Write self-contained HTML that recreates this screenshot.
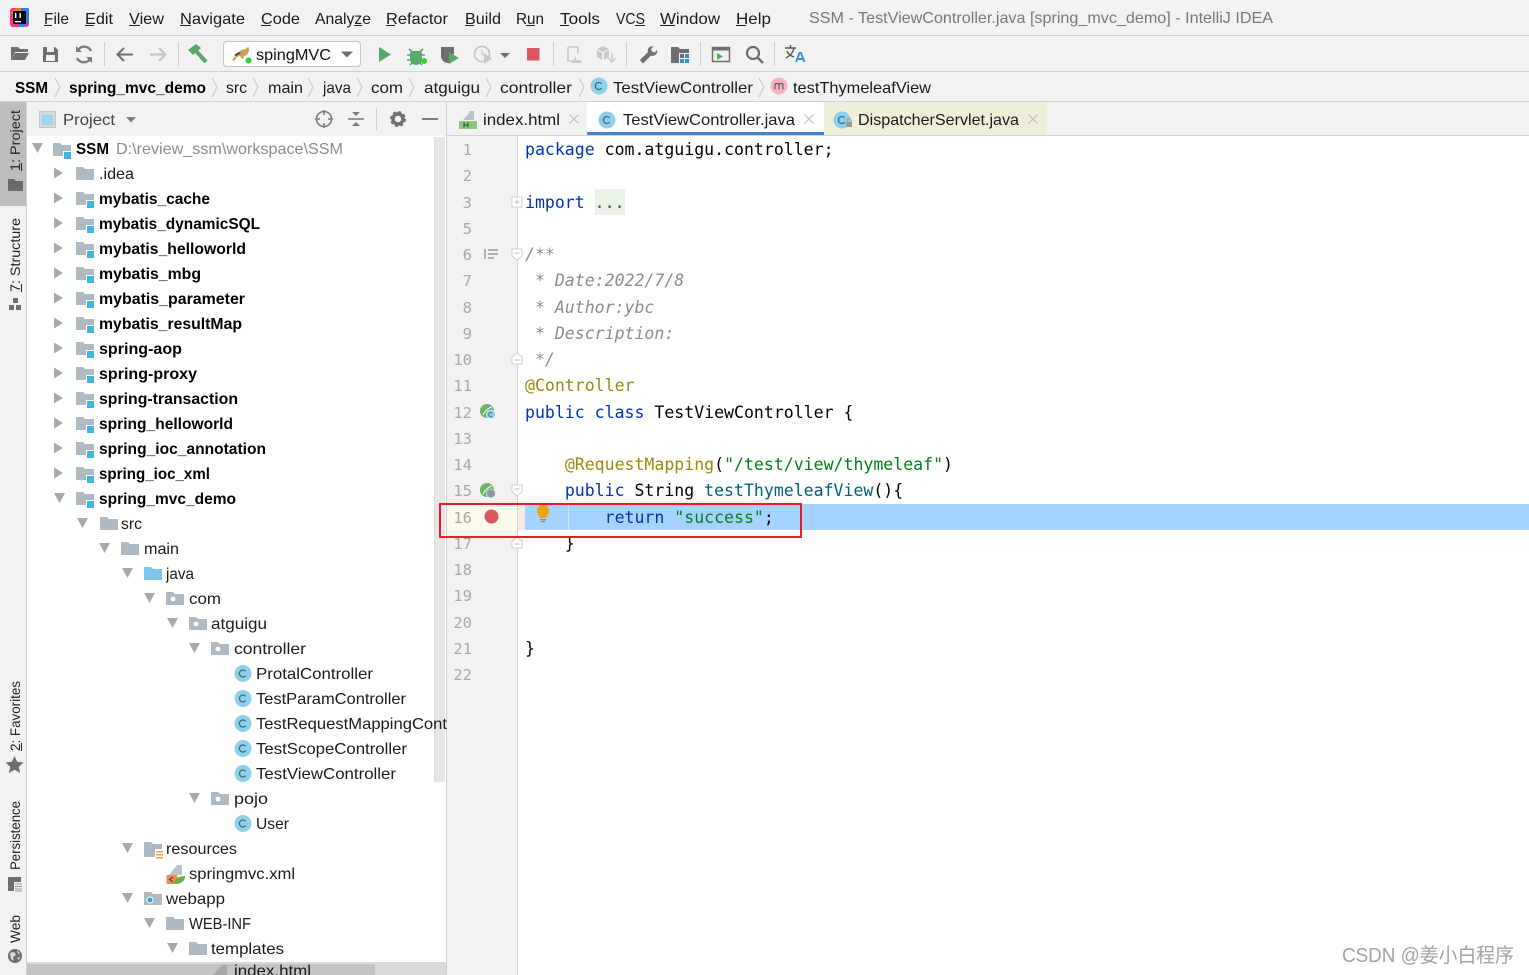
<!DOCTYPE html>
<html><head><meta charset="utf-8"><title>SSM - TestViewController.java</title>
<style>
html,body{margin:0;padding:0;background:#fff;overflow:hidden}
svg{display:block}
text{font-family:"Liberation Sans","Noto Sans CJK SC",sans-serif;font-size:16px;fill:#1a1a1a;white-space:pre}
.b{font-weight:bold;fill:#000}
.g{fill:#8c8c8c}
.m{font-family:"DejaVu Sans Mono","Liberation Mono",monospace;font-size:16.55px;fill:#000}
.n{font-family:"DejaVu Sans Mono","Liberation Mono",monospace;font-size:15.5px;fill:#a8a8a8;text-anchor:end}
.k{fill:#0033b3}.a{fill:#9e880d}.s{fill:#067d17}.c{fill:#8c8c8c;font-style:italic}.f{fill:#00627a}
.v{font-size:14px;fill:#222}
</style></head><body>
<svg width="1529" height="975" viewBox="0 0 1529 975" xmlns="http://www.w3.org/2000/svg">
<defs>
<symbol id="fo" overflow="visible"><path d="M0 1h7l2 2h9v11H0z" fill="#afb9c1"/></symbol>
<symbol id="mo" overflow="visible"><path d="M0 1h7l2 2h9v11H0z" fill="#afb9c1"/><rect x="10.500" y="9.500" width="8" height="8" fill="#40b6e0" stroke="#fff" stroke-width="1"/></symbol>
<symbol id="pk" overflow="visible"><path d="M0 1h7l2 2h9v11H0z" fill="#afb9c1"/><circle cx="7" cy="8" r="2.4" fill="#fff"/></symbol>
<symbol id="cl" overflow="visible"><circle r="8.5" fill="#8dd1ec"/><path d="M2.6-2.2A3.5 3.5 0 1 0 2.6 2.2" fill="none" stroke="#4d6470" stroke-width="1.3"/></symbol>
<symbol id="tr" overflow="visible"><path d="M-5-5.5L4 0L-5 5.5z" fill="#a9a9a9"/></symbol>
<symbol id="td" overflow="visible"><path d="M-5-5H6L0.500 5z" fill="#a9a9a9"/></symbol>
<symbol id="fd" overflow="visible"><path d="M-5-5h10v7l-5 4l-5-4z" fill="#fff" stroke="#d0d0d0"/><path d="M-2.5-1h5" stroke="#bbb"/></symbol>
<symbol id="fu" overflow="visible"><path d="M-5 5h10v-7l-5-4l-5 4z" fill="#fff" stroke="#d0d0d0"/><path d="M-2.5 1h5" stroke="#bbb"/></symbol>
</defs>

<!-- base -->
<rect width="1529" height="975" fill="#fff"/>
<rect width="1529" height="136" fill="#f2f2f2"/>
<rect y="35" width="1529" height="1" fill="#d1d1d1"/>
<rect y="71" width="1529" height="1" fill="#d1d1d1"/>
<rect y="101" width="1529" height="1" fill="#d1d1d1"/>
<rect y="135" x="447" width="1082" height="1" fill="#d1d1d1"/>
<rect y="102" width="27" height="873" fill="#f2f2f2"/>
<rect x="26" y="102" width="1" height="873" fill="#d1d1d1"/>
<rect y="102" width="26" height="104" fill="#bdbdbd"/>
<rect x="446" y="102" width="1" height="873" fill="#d1d1d1"/>
<rect x="27" y="102" width="419" height="34" fill="#f2f2f2"/>

<!-- title / menu -->
<g>
<rect x="10" y="8" width="19" height="19" rx="3" fill="#ff318c"/>
<path d="M19 8h9a1 1 0 0 1 1 1v12l-4 6h-6z" fill="#3b7bf0"/>
<path d="M10 14l6-6h5v6z" fill="#f97a12"/>
<rect x="13" y="11" width="13" height="13" fill="#000"/>
<rect x="15" y="21" width="6" height="1.3" fill="#fff"/>
<rect x="15" y="13" width="1.4" height="5" fill="#fff"/><rect x="19.5" y="13" width="1.4" height="5" fill="#fff"/>
</g>
<text x="44" y="24" textLength="25" lengthAdjust="spacingAndGlyphs">File</text><rect x="44" y="25" width="8" height="1" fill="#222"/>
<text x="85" y="24" textLength="28" lengthAdjust="spacingAndGlyphs">Edit</text><rect x="85" y="25" width="9" height="1" fill="#222"/>
<text x="129" y="24" textLength="35" lengthAdjust="spacingAndGlyphs">View</text><rect x="129" y="25" width="11" height="1" fill="#222"/>
<text x="180" y="24" textLength="65" lengthAdjust="spacingAndGlyphs">Navigate</text><rect x="180" y="25" width="11" height="1" fill="#222"/>
<text x="261" y="24" textLength="39" lengthAdjust="spacingAndGlyphs">Code</text><rect x="261" y="25" width="10" height="1" fill="#222"/>
<text x="315" y="24" textLength="56" lengthAdjust="spacingAndGlyphs">Analyze</text><rect x="354" y="25" width="8" height="1" fill="#222"/>
<text x="386" y="24" textLength="62" lengthAdjust="spacingAndGlyphs">Refactor</text><rect x="386" y="25" width="9" height="1" fill="#222"/>
<text x="465" y="24" textLength="36" lengthAdjust="spacingAndGlyphs">Build</text><rect x="465" y="25" width="9" height="1" fill="#222"/>
<text x="516" y="24" textLength="28" lengthAdjust="spacingAndGlyphs">Run</text><rect x="526" y="25" width="9" height="1" fill="#222"/>
<text x="560" y="24" textLength="40" lengthAdjust="spacingAndGlyphs">Tools</text><rect x="560" y="25" width="9" height="1" fill="#222"/>
<text x="616" y="24" textLength="29" lengthAdjust="spacingAndGlyphs">VCS</text><rect x="635" y="25" width="10" height="1" fill="#222"/>
<text x="660" y="24" textLength="60" lengthAdjust="spacingAndGlyphs">Window</text><rect x="660" y="25" width="15" height="1" fill="#222"/>
<text x="736" y="24" textLength="35" lengthAdjust="spacingAndGlyphs">Help</text><rect x="736" y="25" width="10" height="1" fill="#222"/>
<text x="809" y="23" textLength="464" lengthAdjust="spacingAndGlyphs" fill="#777" style="fill:#777">SSM - TestViewController.java [spring_mvc_demo] - IntelliJ IDEA</text>

<!-- toolbar -->
<path d="M11 47h7l2 2h8v3H15l-4 8zM15 53h14l-4 7H11z" fill="#6e6e6e"/>
<path d="M43 47h12l3 3v12H43z" fill="#6e6e6e"/><rect x="47" y="47" width="7" height="5" fill="#f2f2f2"/><rect x="46" y="55" width="9" height="6" fill="#f2f2f2"/>
<path d="M91 51a7.500 7.500 0 0 0-13-1M77 58a7.500 7.500 0 0 0 13 1" fill="none" stroke="#7d7d7d" stroke-width="2.400"/><path d="M76 46v6h6zM92 63v-6h-6z" fill="#7d7d7d"/>
<rect x="104" y="42" width="1" height="24" fill="#cfcfcf"/>
<path d="M133 54.500H118M124 48l-6.500 6.500l6.500 6.500" fill="none" stroke="#6e6e6e" stroke-width="2"/>
<path d="M150 54.500h15M159 48l6.500 6.500l-6.500 6.500" fill="none" stroke="#c2c2c2" stroke-width="2"/>
<rect x="178" y="42" width="1" height="24" fill="#cfcfcf"/>
<path d="M188 50l8-6 5 4-8 7z" fill="#59a869"/><path d="M196 51l10 11" stroke="#59a869" stroke-width="4" fill="none"/>
<rect x="223.500" y="41.500" width="137" height="25" rx="3" fill="#fff" stroke="#c4c4c4"/>
<path d="M232 60l6-7 3-3 5-1 1-2 1 1 1-1 0 4-2 4-3 1-1 3-2-1-1-2-3 1-3 4z" fill="#c9a35c"/><path d="M234 55l5-3 2 1-5 3z" fill="#3a3a3a"/><circle cx="248.500" cy="60.500" r="3" fill="#2fd02f"/>
<text x="256" y="60" textLength="75" lengthAdjust="spacingAndGlyphs" style="fill:#111">spingMVC</text>
<path d="M341 51.500h12l-6 6z" fill="#6e6e6e"/>
<path d="M379 47l12 7.500-12 7.500z" fill="#59a869"/>
<path d="M411 51h10l1 2v6a5.500 5.500 0 0 1-12 0v-6z" fill="#59a869"/><path d="M409 49l3 3M423 49l-3 3M407 55h4M421 55h4M407 60h4M421 60h4M410 65l2-2M422 65l-2-2M416 52v11" stroke="#59a869" stroke-width="1.600" fill="none"/><circle cx="424" cy="61" r="3" fill="#2fd02f"/>
<path d="M441 47h13v7l-4 1v8h-2a7 7 0 0 1-7-7z" fill="#6e6e6e"/><path d="M449 52l10 6-10 6z" fill="#59a869"/>
<circle cx="482" cy="54" r="7.500" fill="none" stroke="#c2c2c2" stroke-width="1.600"/><path d="M482 50v4.500l3 1.500" fill="none" stroke="#c2c2c2"/><path d="M484 53l8 5.500-8 5.500z" fill="#c9c9c9"/>
<path d="M500 53h10l-5 5z" fill="#6e6e6e"/>
<rect x="527" y="48" width="12.500" height="12.500" fill="#db5860"/>
<rect x="553" y="42" width="1" height="24" fill="#cfcfcf"/>
<path d="M568 47h10v7M568 47v14h5" fill="none" stroke="#c9c9c9" stroke-width="1.600"/><path d="M571 63l5-7v4h5l1 3z" fill="#c9c9c9"/>
<path d="M597 49l6-3 6 3-6 3zM597 50v7l5 3v-7zM609 50l-5 3v7l5-3z" fill="#c9c9c9"/><path d="M612 53v8M608.500 58l3.500 4 3.500-4" fill="none" stroke="#c9c9c9" stroke-width="1.600"/>
<rect x="626" y="42" width="1" height="24" fill="#cfcfcf"/>
<path d="M640 60l8-8a4.500 4.500 0 0 1 1-4.500a4.500 4.500 0 0 1 4.500-1l-2.500 2.500 1 2.500 2.500 1 2.500-2.500a4.500 4.500 0 0 1-6 5.500l-8 8z" fill="#6e6e6e"/>
<path d="M671 47h7l2 2h9v4h-10v10h-8z" fill="#6e6e6e"/><g fill="#3592c4"><rect x="685" y="54" width="4" height="4"/><rect x="680" y="59" width="4" height="4"/><rect x="685" y="59" width="4" height="4"/></g><rect x="680" y="54" width="4" height="4" fill="#6e6e6e"/>
<rect x="700" y="42" width="1" height="24" fill="#cfcfcf"/>
<rect x="712.500" y="47.500" width="17" height="14" fill="none" stroke="#6e6e6e" stroke-width="1.500"/><rect x="712" y="47" width="18" height="3.500" fill="#6e6e6e"/><path d="M717 53l6 3.500-6 3.500z" fill="#59a869"/>
<circle cx="753" cy="53" r="6" fill="none" stroke="#6e6e6e" stroke-width="2.200"/><path d="M757.500 57.500l5.500 5.500" stroke="#6e6e6e" stroke-width="2.400"/>
<rect x="774" y="42" width="1" height="24" fill="#cfcfcf"/>
<path d="M785 48h11M790.500 45v3M794 48c-1 5-4 8-8 10M787 51c1 3 4 5 7 6" fill="none" stroke="#555" stroke-width="1.400"/><path d="M796 62l3.500-9h1.500l3.500 9M797.500 59h6" fill="none" stroke="#3b8de0" stroke-width="1.900"/>

<!-- breadcrumb -->
<g fill="none" stroke="#c7c7c7" stroke-width="1"><path d="M55 78l5 9-5 10M212 78l5 9-5 10M253 78l5 9-5 10M308 78l5 9-5 10M357 78l5 9-5 10M409 78l5 9-5 10M486 78l5 9-5 10M579 78l5 9-5 10M759 78l5 9-5 10"/></g>
<text class="b" x="15" y="93" textLength="33" lengthAdjust="spacingAndGlyphs">SSM</text>
<text class="b" x="69" y="93" textLength="137" lengthAdjust="spacingAndGlyphs">spring_mvc_demo</text>
<text x="226" y="93" textLength="21" lengthAdjust="spacingAndGlyphs">src</text>
<text x="268" y="93" textLength="35" lengthAdjust="spacingAndGlyphs">main</text>
<text x="323" y="93" textLength="28" lengthAdjust="spacingAndGlyphs">java</text>
<text x="371" y="93" textLength="32" lengthAdjust="spacingAndGlyphs">com</text>
<text x="424" y="93" textLength="56" lengthAdjust="spacingAndGlyphs">atguigu</text>
<text x="500" y="93" textLength="72" lengthAdjust="spacingAndGlyphs">controller</text>
<use href="#cl" x="599" y="86"/>
<text x="613" y="93" textLength="140" lengthAdjust="spacingAndGlyphs">TestViewController</text>
<circle cx="779" cy="86" r="8.500" fill="#f5b4c0"/>
<path d="M775 89.500v-6M775 85q0-1.500 2-1.500t2 1.500v4.500M779 85q0-1.500 2-1.500t2 1.500v4.500" fill="none" stroke="#6a5a5e" stroke-width="1.200"/>
<text x="793" y="93" textLength="138" lengthAdjust="spacingAndGlyphs">testThymeleafView</text>

<!-- project header -->
<rect x="39.500" y="111.500" width="16" height="16" fill="#d4dbe0" stroke="#c0c8ce"/><rect x="42" y="115" width="11" height="10" fill="#9ed5f0"/>
<text x="63" y="125" textLength="52" lengthAdjust="spacingAndGlyphs" style="fill:#444">Project</text>
<path d="M126 117h10l-5 5.500z" fill="#7c7c7c"/>
<circle cx="324" cy="119" r="7.500" fill="none" stroke="#7c7c7c" stroke-width="1.600"/><path d="M324 110v5M324 123v5M315 119h5M328 119h5" stroke="#7c7c7c" stroke-width="1.600"/>
<path d="M348 119h16" stroke="#7c7c7c" stroke-width="1.600"/><path d="M352 112h8l-4 4zM352 126h8l-4-4z" fill="#7c7c7c"/>
<rect x="376" y="108" width="1" height="22" fill="#d1d1d1"/>
<circle cx="398" cy="119" r="5" fill="none" stroke="#6e6e6e" stroke-width="3.400"/><circle cx="398" cy="119" r="7" fill="none" stroke="#6e6e6e" stroke-width="2" stroke-dasharray="3 2.500"/>
<rect x="422" y="118" width="16" height="2" fill="#7c7c7c"/>

<!-- left stripe -->
<text class="v" transform="translate(20 171) rotate(-90)" textLength="61" lengthAdjust="spacingAndGlyphs">1: Project</text>
<rect x="21" y="163" width="1" height="8" fill="#222"/>
<path d="M8 179h6l2 2h7v10H8z" fill="#6a6a6a"/>
<text class="v" transform="translate(20 292) rotate(-90)" textLength="74" lengthAdjust="spacingAndGlyphs">7: Structure</text>
<rect x="21" y="284" width="1" height="8" fill="#222"/>
<g fill="#6e6e6e"><rect x="13" y="298" width="5" height="5"/><rect x="9" y="305" width="5" height="5"/><rect x="16" y="305" width="5" height="5"/></g>
<text class="v" transform="translate(20 751) rotate(-90)" textLength="70" lengthAdjust="spacingAndGlyphs">2: Favorites</text>
<rect x="21" y="743" width="1" height="8" fill="#222"/>
<path d="M14.500 756l2.700 5.800 6.300.7-4.700 4.300 1.300 6.200-5.600-3.200-5.600 3.200 1.300-6.200-4.700-4.300 6.300-.7z" fill="#6e6e6e"/>
<text class="v" transform="translate(20 870) rotate(-90)" textLength="69" lengthAdjust="spacingAndGlyphs">Persistence</text>
<path d="M8 877h13v5h-7v9H8z" fill="#6e6e6e"/><path d="M15 884h7M15 886.500h7M15 889h7M15 891h7" stroke="#9a9a9a"/>
<text class="v" transform="translate(20 943) rotate(-90)" textLength="28" lengthAdjust="spacingAndGlyphs">Web</text>
<circle cx="15" cy="956" r="7" fill="#6e6e6e"/><path d="M10 953l4-1 2 3-3 2 1 4-3-2zM17 950l3 3-2 1zM17 958l3-1-1 3z" fill="#ddd"/>

<!-- project scrollbar -->
<rect x="434" y="137" width="11" height="645" fill="#e6e6e6"/>
<rect x="434" y="137" width="1" height="645" fill="#dcdcdc"/>

<!-- tree -->
<use href="#td" x="37" y="148"/>
<use href="#mo" x="53" y="142"/>
<text class="b" x="76" y="154" textLength="33" lengthAdjust="spacingAndGlyphs">SSM</text>
<text class="g" x="116" y="154" textLength="227" lengthAdjust="spacingAndGlyphs">D:\review_ssm\workspace\SSM</text>

<use href="#tr" x="59" y="173"/><use href="#fo" x="76" y="166"/><text x="99" y="179" textLength="35" lengthAdjust="spacingAndGlyphs">.idea</text>
<use href="#tr" x="59" y="198"/><use href="#mo" x="76" y="191"/><text class="b" x="99" y="204" textLength="111" lengthAdjust="spacingAndGlyphs">mybatis_cache</text>
<use href="#tr" x="59" y="223"/><use href="#mo" x="76" y="216"/><text class="b" x="99" y="229" textLength="161" lengthAdjust="spacingAndGlyphs">mybatis_dynamicSQL</text>
<use href="#tr" x="59" y="248"/><use href="#mo" x="76" y="241"/><text class="b" x="99" y="254" textLength="147" lengthAdjust="spacingAndGlyphs">mybatis_helloworld</text>
<use href="#tr" x="59" y="273"/><use href="#mo" x="76" y="266"/><text class="b" x="99" y="279" textLength="102" lengthAdjust="spacingAndGlyphs">mybatis_mbg</text>
<use href="#tr" x="59" y="298"/><use href="#mo" x="76" y="291"/><text class="b" x="99" y="304" textLength="146" lengthAdjust="spacingAndGlyphs">mybatis_parameter</text>
<use href="#tr" x="59" y="323"/><use href="#mo" x="76" y="316"/><text class="b" x="99" y="329" textLength="143" lengthAdjust="spacingAndGlyphs">mybatis_resultMap</text>
<use href="#tr" x="59" y="348"/><use href="#mo" x="76" y="341"/><text class="b" x="99" y="354" textLength="83" lengthAdjust="spacingAndGlyphs">spring-aop</text>
<use href="#tr" x="59" y="373"/><use href="#mo" x="76" y="366"/><text class="b" x="99" y="379" textLength="98" lengthAdjust="spacingAndGlyphs">spring-proxy</text>
<use href="#tr" x="59" y="398"/><use href="#mo" x="76" y="391"/><text class="b" x="99" y="404" textLength="139" lengthAdjust="spacingAndGlyphs">spring-transaction</text>
<use href="#tr" x="59" y="423"/><use href="#mo" x="76" y="416"/><text class="b" x="99" y="429" textLength="134" lengthAdjust="spacingAndGlyphs">spring_helloworld</text>
<use href="#tr" x="59" y="448"/><use href="#mo" x="76" y="441"/><text class="b" x="99" y="454" textLength="167" lengthAdjust="spacingAndGlyphs">spring_ioc_annotation</text>
<use href="#tr" x="59" y="473"/><use href="#mo" x="76" y="466"/><text class="b" x="99" y="479" textLength="111" lengthAdjust="spacingAndGlyphs">spring_ioc_xml</text>
<use href="#td" x="59" y="498"/><use href="#mo" x="76" y="491"/><text class="b" x="99" y="504" textLength="137" lengthAdjust="spacingAndGlyphs">spring_mvc_demo</text>
<use href="#td" x="82" y="523"/><use href="#fo" x="100" y="516"/><text x="121" y="529" textLength="21" lengthAdjust="spacingAndGlyphs">src</text>
<use href="#td" x="104" y="548"/><use href="#fo" x="121" y="541"/><text x="144" y="554" textLength="35" lengthAdjust="spacingAndGlyphs">main</text>
<use href="#td" x="127" y="573"/><path d="M144 567h7l2 2h9v11h-18z" fill="#80c5ea"/><text x="166" y="579" textLength="28" lengthAdjust="spacingAndGlyphs">java</text>
<use href="#td" x="149" y="598"/><use href="#pk" x="166" y="591"/><text x="189" y="604" textLength="32" lengthAdjust="spacingAndGlyphs">com</text>
<use href="#td" x="172" y="623"/><use href="#pk" x="189" y="616"/><text x="211" y="629" textLength="56" lengthAdjust="spacingAndGlyphs">atguigu</text>
<use href="#td" x="194" y="648"/><use href="#pk" x="211" y="641"/><text x="234" y="654" textLength="72" lengthAdjust="spacingAndGlyphs">controller</text>
<use href="#cl" x="243" y="673.500"/><text x="256" y="679" textLength="117" lengthAdjust="spacingAndGlyphs">ProtalController</text>
<use href="#cl" x="243" y="698.500"/><text x="256" y="704" textLength="150" lengthAdjust="spacingAndGlyphs">TestParamController</text>
<use href="#cl" x="243" y="723.500"/><text x="256" y="729" textLength="191" lengthAdjust="spacingAndGlyphs">TestRequestMappingCont</text>
<use href="#cl" x="243" y="748.500"/><text x="256" y="754" textLength="151" lengthAdjust="spacingAndGlyphs">TestScopeController</text>
<use href="#cl" x="243" y="773.500"/><text x="256" y="779" textLength="140" lengthAdjust="spacingAndGlyphs">TestViewController</text>
<use href="#td" x="194" y="798"/><use href="#pk" x="211" y="791"/><text x="234" y="804" textLength="34" lengthAdjust="spacingAndGlyphs">pojo</text>
<use href="#cl" x="243" y="823.500"/><text x="256" y="829" textLength="33" lengthAdjust="spacingAndGlyphs">User</text>
<use href="#td" x="127" y="848"/><path d="M144 842h7l2 2h9v5h-7v8h-11z" fill="#afb9c1"/><path d="M156 851h7v1.500h-7zM156 854h7v1.500h-7zM156 857h7v1.500h-7z" fill="#e4a94e"/><text x="166" y="854" textLength="71" lengthAdjust="spacingAndGlyphs">resources</text>
<path d="M169 875l8-10h5v10z" fill="#bcc3c9"/><rect x="166.500" y="875" width="11" height="9" fill="#f08a5d"/><path d="M174 883q1-7 11-7q0 8-11 8z" fill="#6db33f"/><path d="M173 877l-3.500 2.500 3.500 2.500" fill="none" stroke="#333"/><text x="189" y="879" textLength="106" lengthAdjust="spacingAndGlyphs">springmvc.xml</text>
<use href="#td" x="127" y="898"/><path d="M144 892h7l2 2h9v11h-18z" fill="#afb9c1"/><circle cx="150" cy="900" r="3" fill="#2f9fe0" stroke="#fff"/><text x="166" y="904" textLength="59" lengthAdjust="spacingAndGlyphs">webapp</text>
<use href="#td" x="149" y="923"/><use href="#fo" x="166" y="916"/><text x="189" y="929" textLength="62" lengthAdjust="spacingAndGlyphs">WEB-INF</text>
<use href="#td" x="172" y="948"/><use href="#fo" x="189" y="941"/><text x="211" y="954" textLength="73" lengthAdjust="spacingAndGlyphs">templates</text>
<rect x="27" y="962" width="419" height="13" fill="#d9d9d9"/>
<rect x="27" y="964" width="348" height="11" fill="#c4c4c4"/>
<path d="M213 975l9-10h5v10z" fill="#a9a9a9"/>
<text x="234" y="976" textLength="77" lengthAdjust="spacingAndGlyphs">index.html</text>

<!-- tabs -->
<rect x="447" y="102" width="140" height="33" fill="#f2f2f2"/>
<rect x="587" y="102" width="237" height="30" fill="#fff"/>
<rect x="587" y="132" width="237" height="3" fill="#4083c9"/>
<rect x="824" y="102" width="223" height="33" fill="#efefd9"/>
<path d="M463 120l6-7v-2h5v9z" fill="#bcc3c9"/><rect x="459" y="121" width="18" height="8" fill="#8fc57a"/><path d="M464 122.500v5M468 122.500v5M464 125h4" stroke="#2f4f2f" stroke-width="1.100"/>
<text x="483" y="125" textLength="77" lengthAdjust="spacingAndGlyphs">index.html</text>
<path d="M569.500 114.500l9 9M578.500 114.500l-9 9" stroke="#c0c0c0" stroke-width="1.200"/>
<use href="#cl" x="607" y="120"/>
<text x="623" y="125" textLength="172" lengthAdjust="spacingAndGlyphs">TestViewController.java</text>
<path d="M804.500 114.500l9 9M813.500 114.500l-9 9" stroke="#c0c0c0" stroke-width="1.200"/>
<use href="#cl" x="842" y="120"/>
<rect x="846" y="122" width="6" height="5" fill="#9a9a9a"/><path d="M847 122v-1.500a2 2 0 0 1 4 0V122" fill="none" stroke="#9a9a9a"/>
<text x="858" y="125" textLength="161" lengthAdjust="spacingAndGlyphs">DispatcherServlet.java</text>
<path d="M1028.500 114.500l9 9M1037.500 114.500l-9 9" stroke="#c0c0c0" stroke-width="1.200"/>

<!-- gutter -->
<rect x="447" y="136" width="70" height="839" fill="#f2f2f2"/>
<rect x="517" y="136" width="1" height="839" fill="#d5d5d5"/>
<rect x="447" y="504" width="70" height="26" fill="#fcfaed"/>
<rect x="518" y="504" width="7" height="26" fill="#faeae6"/>
<rect x="525" y="504" width="1004" height="26" fill="#a6d2ff"/>
<rect x="568" y="504" width="1" height="26" fill="#d6e4f2"/>
<rect x="595" y="189" width="30" height="26" fill="#e9f3e6"/>

<text class="n" x="472" y="155">1</text>
<text class="n" x="472" y="181">2</text>
<text class="n" x="472" y="208">3</text>
<text class="n" x="472" y="234">5</text>
<text class="n" x="472" y="260">6</text>
<text class="n" x="472" y="286">7</text>
<text class="n" x="472" y="313">8</text>
<text class="n" x="472" y="339">9</text>
<text class="n" x="472" y="365">10</text>
<text class="n" x="472" y="391">11</text>
<text class="n" x="472" y="418">12</text>
<text class="n" x="472" y="444">13</text>
<text class="n" x="472" y="470">14</text>
<text class="n" x="472" y="496">15</text>
<text class="n" x="472" y="523">16</text>
<text class="n" x="472" y="549">17</text>
<text class="n" x="472" y="575">18</text>
<text class="n" x="472" y="601">19</text>
<text class="n" x="472" y="628">20</text>
<text class="n" x="472" y="654">21</text>
<text class="n" x="472" y="680">22</text>

<!-- gutter icons -->
<path d="M484 249h2v10h-2zM488 249h10v2h-10zM488 253h10v2h-10zM488 257h6v2h-6z" fill="#b0b0b0"/>
<rect x="512" y="197" width="10" height="10" fill="#fff" stroke="#d0d0d0"/><path d="M514.500 202h5M517 199.500v5" stroke="#bbb"/>
<use href="#fd" x="517" y="254"/>
<use href="#fu" x="517" y="359"/>
<use href="#fd" x="517" y="490"/>
<use href="#fu" x="517" y="543"/>
<circle cx="487" cy="411" r="7" fill="#6db36a"/><path d="M483 415q4-7 9-8" stroke="#fff" fill="none"/><circle cx="491" cy="414.500" r="4.500" fill="#8dd1ec" stroke="#fff" stroke-width=".6"/><path d="M492 413a2 2 0 1 0 0 3" fill="none" stroke="#4d6470" stroke-width=".9"/>
<circle cx="487" cy="490" r="7" fill="#6db36a"/><path d="M483 494q4-7 9-8" stroke="#fff" fill="none"/><circle cx="491" cy="493.500" r="4.500" fill="#8c9aa5" stroke="#fff" stroke-width=".6"/>
<circle cx="491.500" cy="516.500" r="7" fill="#db5860"/>
<path d="M543 505a6 6 0 0 1 4 10.500l-1 2.500h-6l-1-2.500A6 6 0 0 1 543 505z" fill="#f0a30a"/><rect x="540" y="519" width="6" height="1.300" fill="#8a8a8a"/><rect x="541" y="521" width="4" height="1.300" fill="#8a8a8a"/>

<!-- code -->
<text class="m" x="525" y="155"><tspan class="k">package</tspan> com.atguigu.controller;</text>
<text class="m" x="525" y="208"><tspan class="k">import</tspan> <tspan style="fill:#4a4a4a">...</tspan></text>
<text class="m c" x="525" y="260">/**</text>
<text class="m c" x="525" y="286"> * Date:2022/7/8</text>
<text class="m c" x="525" y="313"> * Author:ybc</text>
<text class="m c" x="525" y="339"> * Description:</text>
<text class="m c" x="525" y="365"> */</text>
<text class="m a" x="525" y="391">@Controller</text>
<text class="m" x="525" y="418"><tspan class="k">public class</tspan> TestViewController {</text>
<text class="m" x="525" y="470">    <tspan class="a">@RequestMapping</tspan>(<tspan class="s">"/test/view/thymeleaf"</tspan>)</text>
<text class="m" x="525" y="496">    <tspan class="k">public</tspan> String <tspan class="f">testThymeleafView</tspan>(){</text>
<text class="m" x="525" y="523">        <tspan class="k">return</tspan> <tspan class="s">"success"</tspan>;</text>
<text class="m" x="525" y="549">    }</text>
<text class="m" x="525" y="654">}</text>

<!-- red box -->
<rect x="440" y="504" width="361" height="33" fill="none" stroke="#ed1c24" stroke-width="2"/>

<!-- watermark -->
<text x="1342" y="962" textLength="172" lengthAdjust="spacingAndGlyphs" style="fill:#a3a3a3;font-size:20px">CSDN @姜小白程序</text>
</svg>
</body></html>
